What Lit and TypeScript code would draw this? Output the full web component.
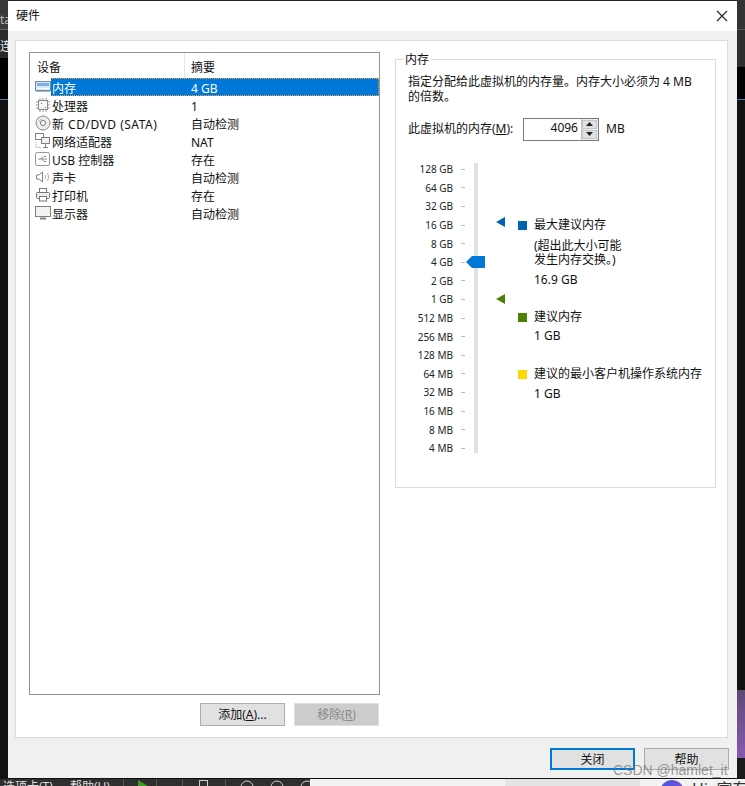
import { LitElement, html, css, svg } from "lit";
import { customElement } from "lit/decorators.js";

const icons: Record<string, any> = {
  mem: svg`<rect x="0.5" y="2.5" width="15" height="9" fill="#d6e6f5" stroke="#6d8fb0"/><rect x="2" y="4" width="12" height="3" fill="#7fb0dc"/><path d="M2 9.5h3M6 9.5h8" stroke="#fff"/><path d="M1 12.5h14" stroke="#a9b4bd"/>`,
  cpu: svg`<rect x="3.5" y="3.5" width="9" height="9" fill="#f7f7f7" stroke="#8a8a8a"/><path d="M5 1v2M8 1v2M11 1v2M5 13v2M8 13v2M11 13v2M1 5h2M1 8h2M1 11h2M13 5h2M13 8h2M13 11h2" stroke="#9a9a9a"/><path d="M6 6h1v1H6zM10 10h1v1h-1z" fill="#666"/>`,
  cd: svg`<circle cx="8" cy="8" r="7" fill="#eee" stroke="#8a8a8a"/><circle cx="8" cy="8" r="2.5" fill="#fff" stroke="#777"/><path d="M4 7a4 4 0 0 1 3-3" stroke="#bbb" fill="none"/>`,
  net: svg`<rect x="0.5" y="0.5" width="8" height="6" fill="#fff" stroke="#808080"/><rect x="6.5" y="4.5" width="8" height="6" fill="#f0f0f0" stroke="#808080"/><path d="M10.5 11v3M8 14.5h5" stroke="#808080"/><path d="M1 9v5.5h5" stroke="#999" stroke-dasharray="1 1" fill="none"/>`,
  usb: svg`<rect x="0.5" y="1.5" width="14" height="13" rx="1.5" fill="#fff" stroke="#999"/><path d="M3 8h9M9 5.5h2M6 8l2-2.5M7 8l2 2.5h2" stroke="#888" fill="none"/>`,
  snd: svg`<path d="M1.5 6v4h2.5l3.5 3V3L4 6z" fill="#fff" stroke="#808080"/><path d="M10 6a3 3 0 0 1 0 4M12 4a6 6 0 0 1 0 8" stroke="#aaa" fill="none"/>`,
  prn: svg`<rect x="4.5" y="1.5" width="7" height="4" fill="#fff" stroke="#777"/><rect x="1.5" y="5.5" width="13" height="6" rx="1" fill="#eee" stroke="#777"/><rect x="4.5" y="9.5" width="7" height="4.5" fill="#fff" stroke="#777"/>`,
  mon: svg`<rect x="0.5" y="1.5" width="15" height="10" fill="#f2f2f2" stroke="#808080"/><path d="M5 13.5h6" stroke="#808080" stroke-width="2"/>`,
};
const rows: [string, string, string][] = [
  ["mem", "内存", "4 GB"], ["cpu", "处理器", "1"], ["cd", "新 CD/DVD (SATA)", "自动检测"], ["net", "网络适配器", "NAT"],
  ["usb", "USB 控制器", "存在"], ["snd", "声卡", "自动检测"], ["prn", "打印机", "存在"], ["mon", "显示器", "自动检测"],
];
const scale = ["128 GB", "64 GB", "32 GB", "16 GB", "8 GB", "4 GB", "2 GB", "1 GB", "512 MB", "256 MB", "128 MB", "64 MB", "32 MB", "16 MB", "8 MB", "4 MB"];

@customElement("app-root")
export class AppRoot extends LitElement {
  static styles = css`
    :host { display: block; width: 745px; height: 786px; background: #2b2b2b; font: 12px/18px "Noto Sans", "Noto Sans CJK SC", sans-serif; color: #111; overflow: hidden; position: relative; }
    .stage { display: flex; height: 778px; }
    .bgl { width: 8px; flex: none; display: flex; flex-direction: column; overflow: hidden; color: #bbb; }
    .bgl .a { height: 30px; background: #3a3a3a; border-bottom: 1px solid #666; box-sizing: border-box; text-align: right; line-height: 40px; overflow: hidden; }
    .bgl .b { height: 28px; background: #2a2a2a; color: #eee; text-align: right; line-height: 34px; white-space: nowrap; overflow: hidden; }
    .bgl .c { height: 42px; background: #000; border-bottom: 1px solid #3d7fa8; box-sizing: border-box; }
    .bgl .d { flex: 1; background: #111; }
    .bgr { width: 8px; flex: none; display: flex; flex-direction: column; }
    .bgr .a { height: 30px; background: #333; border-bottom: 1px solid #555; box-sizing: border-box; }
    .bgr .b { height: 37px; background: #2e2e2e; }
    .bgr .c { height: 33px; background: #000; border-bottom: 1px solid #3d7fa8; box-sizing: border-box; }
    .bgr .d { flex: 1; background: #111; }
    .bgr .e { height: 68px; background: linear-gradient(#5c4a78, #8a58b0); }
    .bgr .f { height: 20px; background: #1a1a1a; }
    .win { width: 729px; flex: none; background: #f0f0f0; display: flex; flex-direction: column; overflow: hidden; box-sizing: border-box; border-top: 1px solid #222; }
    .title { height: 30px; background: #fff; display: flex; align-items: center; justify-content: space-between; padding: 0 9px 0 8px; flex: none; box-sizing: border-box; }
    .x { width: 12px; height: 12px; display: block; }
    .main { margin: 9px 9px 0 7px; height: 698px; flex: none; background: #fff; border: 1px solid #dcdcdc; box-sizing: border-box; display: flex; padding: 11px 11px 0 13px; gap: 15px; }
    .left { width: 351px; flex: none; display: flex; flex-direction: column; }
    .list { height: 643px; border: 1px solid #8f9296; box-sizing: border-box; flex: none; }
    .head { display: grid; grid-template-columns: 154px 1fr; height: 25px; }
    .head span { padding-left: 7px; line-height: 29px; height: 25px; }
    .head span + span { border-left: 1px solid #e5e5e5; padding-left: 6px; }
    .row { display: grid; grid-template-columns: 154px 1fr; height: 18px; line-height: 22px; }
    .name { display: flex; align-items: flex-start; gap: 1px; padding-left: 5px; white-space: nowrap; }
    .name svg { width: 16px; height: 16px; flex: none; margin-top: 1px; }
    .name .wide { letter-spacing: 0.5px; }
    .val { padding-left: 7px; }
    .row.sel { background: #0078d7; color: #fff; outline: 1px dotted #f0a040; outline-offset: -1px; clip-path: inset(0 0 0 21px); }
    .rowwrap { position: relative; }
    .selicon { position: absolute; left: 5px; top: 1px; width: 16px; height: 16px; }
    .btns { display: flex; justify-content: flex-end; gap: 9px; margin-top: 8px; padding-right: 1px; }
    .btn { width: 85px; height: 23px; box-sizing: border-box; background: #e1e1e1; border: 1px solid #adadad; text-align: center; line-height: 21px; }
    .btn.dis { background: #cccccc; border-color: #e0e0e0; color: #8a8a8a; }
    u { text-decoration: underline; text-underline-offset: 1px; }
    .right { flex: 1; min-width: 0; }
    fieldset { margin: 0; padding: 0 12px; border: 1px solid #dcdcdc; height: 436px; box-sizing: border-box; }
    legend { padding: 0 2px; margin-left: -5px; line-height: 16px; height: 14px; }
    .desc { margin-top: 8px; white-space: nowrap; }
    .desc div { height: 15px; line-height: 15px; }
    .amount { display: flex; align-items: center; margin-top: 13px; height: 24px; }
    .amount .lbl { width: 115px; white-space: nowrap; }
    .spin { width: 76px; height: 23px; border: 1px solid #7a7a7a; box-sizing: border-box; display: flex; background: #fff; }
    .spin .v { flex: 1; text-align: right; line-height: 18px; padding-right: 3px; }
    .arrows { width: 17px; border-left: 1px solid #c4c4c4; background: #eee; display: flex; flex-direction: column; gap: 1px; padding: 1px 1px 1px 0; box-sizing: border-box; }
    .arrows i { flex: 1; background: #e1e1e1; border: 1px solid #c4c4c4; display: flex; align-items: center; justify-content: center; }
    .arrows svg { width: 7px; height: 4px; display: block; }
    .unit { margin-left: 7px; }
    .mem { display: flex; margin-top: 22px; height: 290px; }
    .scale { width: 57px; flex: none; display: flex; flex-direction: column; margin-top: -3px; }
    .scale div { display: flex; justify-content: flex-end; align-items: center; height: 18.6px; flex: none; font-size: 10px; color: #222; white-space: nowrap; }
    .scale div::after { content: ""; width: 4px; height: 1px; background: #bbb; margin-left: 8px; }
    .track { width: 4px; background: #dfe2e2; margin-left: 9px; position: relative; flex: none; }
    .thumb { position: absolute; left: -8px; top: 93px; width: 19px; height: 12px; display: block; }
    .marks { width: 22px; margin-left: 18px; position: relative; flex: none; }
    .marks svg { position: absolute; left: 0; width: 9px; height: 10px; display: block; }
    .m1 { top: 54px; }
    .m2 { top: 131px; }
    .legend { flex: 1; display: flex; flex-direction: column; padding: 53px 0 0 16px; }
    .ltitle { display: flex; align-items: center; margin-left: -16px; white-space: nowrap; height: 18px; }
    .sq { width: 9px; height: 9px; margin-right: 7px; flex: none; }
    .b { background: #0063b1; } .g { background: #498205; } .y { background: #ffd800; }
    .note { line-height: 14px; margin: 5px 0 4px; white-space: nowrap; }
    .big { height: 18px; margin-top: 1px; }
    .big.low { margin-top: 2px; }
    .t2 { margin-top: 19px; }
    .t3 { margin-top: 20px; }
    .foot { flex: none; display: flex; justify-content: flex-end; gap: 9px; padding-top: 10px; margin-right: 8px; }
    .foot .btn { width: 85px; height: 22px; line-height: 22px; }
    .foot .btn.def { border: 2px solid #0078d7; line-height: 20px; }
    .strip { height: 8px; background: #2f2f2f; display: flex; overflow: hidden; color: #ddd; line-height: 16px; border-top: 1px solid #111; box-sizing: border-box; }
    .strip .menu { width: 310px; flex: none; padding-left: 3px; box-sizing: border-box; display: flex; gap: 17px; white-space: nowrap; position: relative; }
    .tools { position: absolute; left: 120px; top: 0; width: 190px; height: 8px; display: block; }
    .strip .lite { flex: 1; background: linear-gradient(90deg, #f3f3f3 195px, #e4e4e4 195px, #e4e4e4 330px, #f3f3f3 330px); color: #333; display: flex; justify-content: flex-end; overflow: hidden; white-space: nowrap; }
    .avatar { width: 24px; height: 24px; border-radius: 50%; background: linear-gradient(135deg, #3d5ae0, #9a4ad0); margin: 1px 8px 0 0; flex: none; }
    .hi { width: 53px; flex: none; font-size: 16px; line-height: 20px; overflow: hidden; }
    .mark { position: absolute; left: 613px; top: 761px; font: 14px/18px "Liberation Sans", sans-serif; color: rgba(120,120,120,.75); white-space: nowrap; }
  `;
  render() {
    return html`<div class="stage">
      <div class="bgl"><div class="a">ta</div><div class="b">连</div><div class="c"></div><div class="d"></div></div>
      <div class="win">
      <div class="title"><span>硬件</span>
        <svg class="x" viewBox="0 0 12 12"><path d="M1 1l10 10M11 1L1 11" stroke="#222" stroke-width="1.1" fill="none"/></svg></div>
      <div class="main">
        <div class="left">
          <div class="list">
            <div class="head"><span>设备</span><span>摘要</span></div>
            ${rows.map(([ic, n, v], i) => html`<div class="rowwrap">
              <div class="row ${i === 0 ? "sel" : ""}">
                <div class="name"><svg viewBox="0 0 16 16">${i === 0 ? "" : icons[ic]}</svg><span class="${i === 2 ? "wide" : ""}">${n}</span></div>
                <div class="val">${v}</div>
              </div>
              ${i === 0 ? html`<svg class="selicon" viewBox="0 0 16 16">${icons[ic]}</svg>` : ""}
            </div>`)}
          </div>
          <div class="btns"><div class="btn">添加(<u>A</u>)...</div><div class="btn dis">移除(<u>R</u>)</div></div>
        </div>
        <div class="right">
          <fieldset>
            <legend>内存</legend>
            <div class="desc"><div>指定分配给此虚拟机的内存量。内存大小必须为 4 MB</div><div>的倍数。</div></div>
            <div class="amount"><span class="lbl">此虚拟机的内存(<u>M</u>):</span>
              <div class="spin"><div class="v">4096</div><div class="arrows">
                <i><svg viewBox="0 0 7 4"><path d="M3.5 0L7 4H0z" fill="#222"/></svg></i>
                <i><svg viewBox="0 0 7 4"><path d="M0 0h7L3.5 4z" fill="#222"/></svg></i>
              </div></div>
              <span class="unit">MB</span></div>
            <div class="mem">
              <div class="scale">${scale.map((s) => html`<div>${s}</div>`)}</div>
              <div class="track"><svg class="thumb" viewBox="0 0 19 12"><path d="M0 6L6 0h13v12H6z" fill="#0078d7"/></svg></div>
              <div class="marks">
                <svg class="m1" viewBox="0 0 9 10"><path d="M0 5l9-5v10z" fill="#0063b1"/></svg>
                <svg class="m2" viewBox="0 0 9 10"><path d="M0 5l9-5v10z" fill="#498205"/></svg>
              </div>
              <div class="legend">
                <div class="ltitle"><span class="sq b"></span>最大建议内存</div>
                <div class="note">(超出此大小可能<br>发生内存交换。)</div>
                <div>16.9 GB</div>
                <div class="ltitle t2"><span class="sq g"></span>建议内存</div>
                <div class="big">1 GB</div>
                <div class="ltitle t3"><span class="sq y"></span>建议的最小客户机操作系统内存</div>
                <div class="big low">1 GB</div>
              </div>
            </div>
          </fieldset>
        </div>
      </div>
      <div class="foot"><div class="btn def">关闭</div><div class="btn">帮助</div></div>
      </div>
      <div class="bgr"><div class="a"></div><div class="b"></div><div class="c"></div><div class="d"></div><div class="e"></div><div class="f"></div></div>
    </div>
    <div class="strip"><div class="menu"><span>选项卡(T)</span><span>帮助(H)</span>
      <svg class="tools" viewBox="0 0 190 8">
        <path d="M3.5 0v8M36.5 0v8M62.5 0v8M105.5 0v8" stroke="#555"/><path d="M18 1l10 6v1H18z" fill="#3f9a2a"/>
        <rect x="79.5" y="1.5" width="8" height="8" fill="none" stroke="#ccc"/>
        <circle cx="127" cy="8" r="6" fill="none" stroke="#ccc"/><circle cx="157" cy="8" r="6" fill="none" stroke="#ccc"/><circle cx="187" cy="8" r="6" fill="none" stroke="#ccc"/>
      </svg></div><div class="lite"><span class="avatar"></span><span class="hi">Hi, 富有</span></div></div>
    <div class="mark">CSDN @hamlet_it</div>`;
  }
}
